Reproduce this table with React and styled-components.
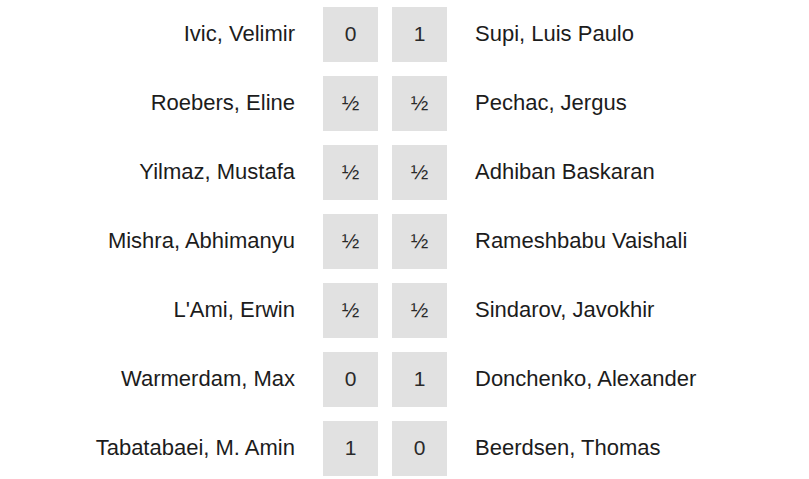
import React from "react";
import styled, { createGlobalStyle } from "styled-components";

const GlobalStyle = createGlobalStyle`
  body {
    margin: 0;
    background: #fff;
    font-family: "Liberation Sans", Arial, sans-serif;
  }
`;

const games = [
  ["Ivic, Velimir", "0", "1", "Supi, Luis Paulo"],
  ["Roebers, Eline", "½", "½", "Pechac, Jergus"],
  ["Yilmaz, Mustafa", "½", "½", "Adhiban Baskaran"],
  ["Mishra, Abhimanyu", "½", "½", "Rameshbabu Vaishali"],
  ["L'Ami, Erwin", "½", "½", "Sindarov, Javokhir"],
  ["Warmerdam, Max", "0", "1", "Donchenko, Alexander"],
  ["Tabatabaei, M. Amin", "1", "0", "Beerdsen, Thomas"],
];

function App() {
  return (
    <>
      <GlobalStyle />
      <Pairings>
        {games.map(([white, ws, bs, black]) => (
          <Row key={white}>
            <Player side="white">{white}</Player>
            <Score>{ws}</Score>
            <Score>{bs}</Score>
            <Player side="black">{black}</Player>
          </Row>
        ))}
      </Pairings>
    </>
  );
}

export default App;

const Pairings = styled.div`
  display: flex;
  flex-direction: column;
  gap: 14px;
  padding-top: 7px;
`;

const Row = styled.div`
  display: grid;
  grid-template-columns: 309px 55px 55px 1fr;
  column-gap: 14px;
  align-items: center;
  height: 55px;
`;

const Player = styled.div`
  font-size: 22px;
  color: #1c1c1c;
  white-space: nowrap;
  padding-bottom: 2px;
  text-align: ${(p) => (p.side === "white" ? "right" : "left")};
  ${(p) => (p.side === "white" ? "padding-right: 14px;" : "padding-left: 14px;")}
`;

const Score = styled.div`
  height: 55px;
  padding-bottom: 2px;
  box-sizing: border-box;
  background: #e1e1e1;
  display: flex;
  align-items: center;
  justify-content: center;
  font-size: 21px;
  color: #2a2a2a;
`;
